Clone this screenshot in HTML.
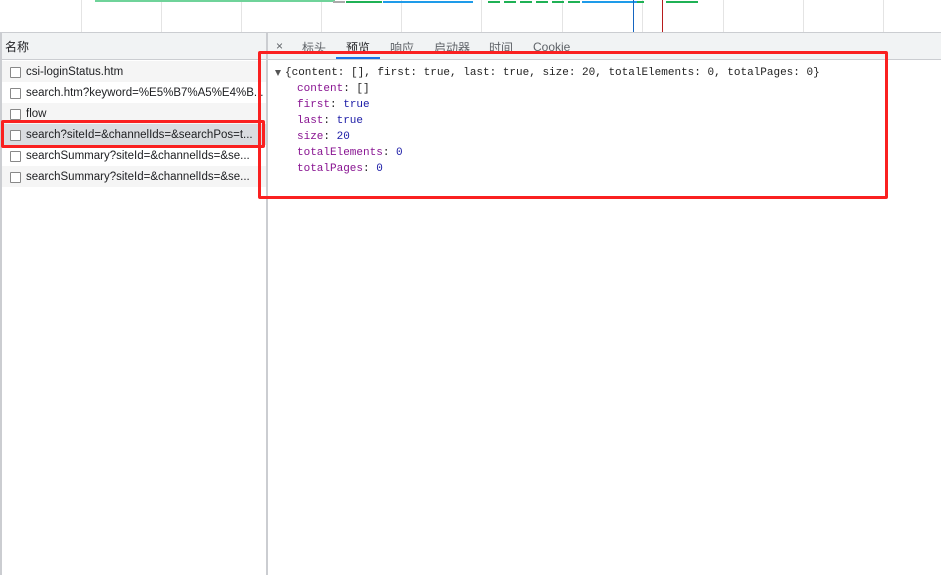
<!DOCTYPE html>
<html><head><meta charset="utf-8"><style>
*{margin:0;padding:0;box-sizing:border-box}
body{width:941px;height:575px;overflow:hidden;background:#fff;position:relative;font-family:"Liberation Sans","Noto Sans CJK SC",sans-serif;font-size:12px;color:#303942}
.abs{position:absolute}
.vl{position:absolute;top:0;height:32px;width:1px;background:#e4e4e4}
.row{position:absolute;left:2px;width:264px;height:21px;line-height:23px;padding-left:24px;white-space:nowrap;overflow:hidden;color:#202124;font-size:11.5px}
.row i{position:absolute;left:8px;top:6px;width:11px;height:11px;border:1px solid #888;border-radius:1px;background:#fff}
.tab{position:absolute;top:39px;font-size:12px;color:#5f6368}
.code{position:absolute;left:285px;font-family:"Liberation Mono",monospace;font-size:11px;line-height:16px;white-space:pre;color:#222}
.k{color:#881391}.v{color:#1a1aa6}
</style></head><body>
<div class="vl" style="left:81px"></div><div class="vl" style="left:161px"></div><div class="vl" style="left:241px"></div><div class="vl" style="left:321px"></div><div class="vl" style="left:401px"></div><div class="vl" style="left:481px"></div><div class="vl" style="left:562px"></div><div class="vl" style="left:642px"></div><div class="vl" style="left:723px"></div><div class="vl" style="left:803px"></div><div class="vl" style="left:883px"></div>
<div class="abs" style="left:95px;top:0;width:240px;height:2px;background:#6fd39a"></div>
<div class="abs" style="left:333px;top:1px;width:12px;height:2px;background:#aaa"></div>
<div class="abs" style="left:346px;top:1px;width:36px;height:2px;background:#1fb155"></div>
<div class="abs" style="left:383px;top:1px;width:90px;height:2px;background:#1e9be9"></div>
<div class="abs" style="left:488px;top:1px;width:160px;height:2px;background:repeating-linear-gradient(90deg,#1fb155 0 12px,transparent 12px 16px)"></div>
<div class="abs" style="left:582px;top:1px;width:55px;height:2px;background:#1e9be9"></div>
<div class="abs" style="left:666px;top:1px;width:32px;height:2px;background:#1fb155"></div>
<div class="abs" style="left:633px;top:0;width:1px;height:32px;background:#1565c0"></div>
<div class="abs" style="left:662px;top:0;width:1px;height:32px;background:#b71c1c"></div>
<div class="abs" style="left:0;top:32px;width:941px;height:1px;background:#cbcdd1"></div>
<div class="abs" style="left:0;top:33px;width:2px;height:542px;background:#cbcdd1"></div>
<div class="abs" style="left:266px;top:33px;width:2px;height:542px;background:#cbcdd1"></div>
<div class="abs" style="left:2px;top:33px;width:264px;height:27px;background:#f1f3f4;border-bottom:1px solid #cbcdd1;line-height:28px;padding-left:3px;color:#202124">名称</div>
<div class="row" style="top:61px;background:#f5f5f5"><i></i>csi-loginStatus.htm</div>
<div class="row" style="top:82px"><i></i>search.htm?keyword=%E5%B7%A5%E4%B...</div>
<div class="row" style="top:103px;background:#f5f5f5"><i></i>flow</div>
<div class="row" style="top:124px;background:#dadce0"><i></i>search?siteId=&amp;channelIds=&amp;searchPos=t...</div>
<div class="row" style="top:145px"><i></i>searchSummary?siteId=&amp;channelIds=&amp;se...</div>
<div class="row" style="top:166px;background:#f5f5f5"><i></i>searchSummary?siteId=&amp;channelIds=&amp;se...</div>
<div class="abs" style="left:268px;top:33px;width:673px;height:27px;background:#f1f3f4;border-bottom:1px solid #cbcdd1"></div>
<div class="tab" style="left:276px">×</div>
<div class="tab" style="left:302px">标头</div>
<div class="tab" style="left:346px;color:#202124">预览</div>
<div class="tab" style="left:390px">响应</div>
<div class="tab" style="left:434px">启动器</div>
<div class="tab" style="left:489px">时间</div>
<div class="tab" style="left:533px;top:40px">Cookie</div>
<div class="abs" style="left:336px;top:57px;width:44px;height:2px;background:#1a73e8"></div>
<div class="abs" style="left:275px;top:70px;width:0;height:0;border-left:3.5px solid transparent;border-right:3.5px solid transparent;border-top:6px solid #555"></div>
<div class="code" style="top:65px">{content: [], first: true, last: true, size: 20, totalElements: 0, totalPages: 0}</div>
<div class="code" style="left:297px;top:81px"><span class="k">content</span>: []
<span class="k">first</span>: <span class="v">true</span>
<span class="k">last</span>: <span class="v">true</span>
<span class="k">size</span>: <span class="v">20</span>
<span class="k">totalElements</span>: <span class="v">0</span>
<span class="k">totalPages</span>: <span class="v">0</span></div>
<div class="abs" style="left:258px;top:51px;width:630px;height:148px;border:3px solid #fa2020;border-radius:2px"></div>
<div class="abs" style="left:1px;top:120px;width:264px;height:28px;border:3px solid #fa2020;border-radius:2px"></div>
</body></html>
